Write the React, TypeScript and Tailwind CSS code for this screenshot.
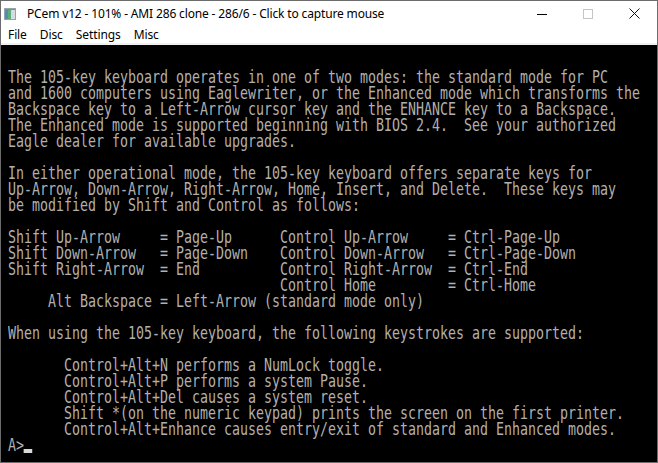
import React from "react";

const lines: string[] = [
  "",
  "The 105-key keyboard operates in one of two modes: the standard mode for PC",
  "and 1600 computers using Eaglewriter, or the Enhanced mode which transforms the",
  "Backspace key to a Left-Arrow cursor key and the ENHANCE key to a Backspace.",
  "The Enhanced mode is supported beginning with BIOS 2.4.  See your authorized",
  "Eagle dealer for available upgrades.",
  "",
  "In either operational mode, the 105-key keyboard offers separate keys for",
  "Up-Arrow, Down-Arrow, Right-Arrow, Home, Insert, and Delete.  These keys may",
  "be modified by Shift and Control as follows:",
  "",
  "Shift Up-Arrow     = Page-Up      Control Up-Arrow     = Ctrl-Page-Up",
  "Shift Down-Arrow   = Page-Down    Control Down-Arrow   = Ctrl-Page-Down",
  "Shift Right-Arrow  = End          Control Right-Arrow  = Ctrl-End",
  "                                  Control Home         = Ctrl-Home",
  "     Alt Backspace = Left-Arrow (standard mode only)",
  "",
  "When using the 105-key keyboard, the following keystrokes are supported:",
  "",
  "       Control+Alt+N performs a NumLock toggle.",
  "       Control+Alt+P performs a system Pause.",
  "       Control+Alt+Del causes a system reset.",
  "       Shift *(on the numeric keypad) prints the screen on the first printer.",
  "       Control+Alt+Enhance causes entry/exit of standard and Enhanced modes.",
];

function AppIcon() {
  return (
    <svg width="12" height="12" viewBox="0 0 12 12">
      <rect x="0.5" y="0.5" width="11" height="11" fill="#e8eaec" stroke="#9aa3ab" />
      <rect x="1" y="2" width="3" height="9" fill="#4f8fb0" />
      <rect x="4" y="2" width="3" height="9" fill="#5fae7a" />
      <rect x="7" y="2" width="4" height="9" fill="#d6dde2" />
      <rect x="1" y="1" width="10" height="1" fill="#7d8a94" />
    </svg>
  );
}

export default function App() {
  return (
    <div
      className="w-[658px] h-[463px] border border-[#6c6c6c] bg-white flex flex-col overflow-hidden"
      style={{ fontFamily: '"Segoe UI", "Noto Sans", sans-serif' }}
    >
      {/* title bar */}
      <div className="h-[25px] flex items-center shrink-0">
        <div className="pl-[3px] pr-[11px] flex items-center">
          <AppIcon />
        </div>
        <div className="text-[12px] text-black flex-1 whitespace-nowrap tracking-[-0.15px]">
          PCem v12 - 101% - AMI 286 clone - 286/6 - Click to capture mouse
        </div>
        <div className="flex h-full">
          <div className="w-[46px] flex items-center justify-center">
            <div className="w-[10px] h-[1px] bg-black mt-[1px]" />
          </div>
          <div className="w-[46px] flex items-center justify-center">
            <div className="w-[10px] h-[10px] border border-[#c4c4c4]" />
          </div>
          <div className="w-[46px] flex items-center justify-center">
            <svg width="11" height="11" viewBox="0 0 11 11">
              <path d="M0.5 0.5 L10.5 10.5 M10.5 0.5 L0.5 10.5" stroke="#111" strokeWidth="1" />
            </svg>
          </div>
        </div>
      </div>
      {/* menu bar */}
      <div className="h-[19px] flex items-center gap-[13px] pl-[7px] text-[12px] text-black border-b-2 border-[#f0f0f0] shrink-0 tracking-[-0.1px]">
        <span>File</span>
        <span>Disc</span>
        <span>Settings</span>
        <span>Misc</span>
      </div>
      {/* screen */}
      <div className="flex-1 bg-black overflow-hidden pl-[7px] pt-[8px]">
        <div
          className="origin-left scale-x-[0.7817] text-[17px] leading-[16px] text-[#b0b0b0]"
          style={{ fontFamily: '"DejaVu Sans Mono", "Liberation Mono", monospace' }}
        >
          {lines.map((l, i) => (
            <div key={i} className="h-[16px] whitespace-pre">
              {l}
            </div>
          ))}
          <div className="h-[16px] whitespace-pre">
            A&gt;
            <span className="inline-block w-[1ch] h-[4px] bg-[#d8d8d8] align-[-2px]" />
          </div>
        </div>
      </div>
    </div>
  );
}
